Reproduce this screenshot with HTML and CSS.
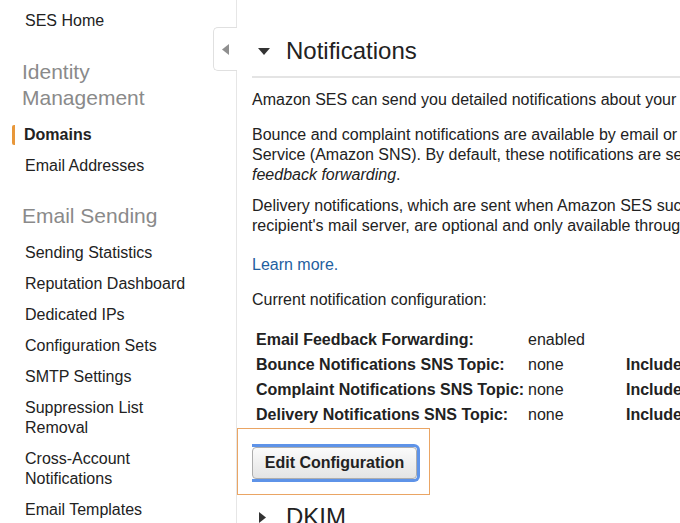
FILE: index.html
```html
<!DOCTYPE html>
<html lang="en">
<head>
<meta charset="utf-8">
<title>SES Notifications</title>
<link rel="stylesheet" href="styles.css">
</head>
<body>
<div class="layout">
  <nav class="sidebar">
    <a class="nav-item home" href="#">SES Home</a>
    <div class="nav-heading">Identity<br>Management</div>
    <a class="nav-item active" href="#">Domains</a>
    <a class="nav-item" href="#">Email Addresses</a>
    <div class="nav-heading">Email Sending</div>
    <a class="nav-item" href="#">Sending Statistics</a>
    <a class="nav-item" href="#">Reputation Dashboard</a>
    <a class="nav-item" href="#">Dedicated IPs</a>
    <a class="nav-item" href="#">Configuration Sets</a>
    <a class="nav-item" href="#">SMTP Settings</a>
    <a class="nav-item" href="#">Suppression List Removal</a>
    <a class="nav-item" href="#">Cross-Account Notifications</a>
    <a class="nav-item" href="#">Email Templates</a>
    <div class="collapse-tab">
      <svg width="7" height="11" viewBox="0 0 7 11"><path d="M7 0 L0 5.5 L7 11 Z" fill="#8f8f8f"/></svg>
    </div>
  </nav>
  <main class="main">
    <div class="section-head">
      <svg class="caret-down" width="12" height="7" viewBox="0 0 12 7"><path d="M0 0 L12 0 L6 7 Z" fill="#333"/></svg>
      <h2>Notifications</h2>
    </div>
    <p class="p-intro">Amazon SES can send you detailed notifications about your bounces, complaints, and deliveries.</p>
    <p class="p-bounce">Bounce and complaint notifications are available by email or through Amazon Simple Notification<br>Service (Amazon SNS). By default, these notifications are sent to you via email by a feature called<br><em>feedback forwarding</em>.</p>
    <p class="p-delivery">Delivery notifications, which are sent when Amazon SES successfully delivers one of your emails to a<br>recipient's mail server, are optional and only available through Amazon SNS.</p>
    <p class="p-learn"><a class="link" href="#">Learn more.</a></p>
    <p class="p-current">Current notification configuration:</p>
    <div class="config">
      <div class="label">Email Feedback Forwarding:</div><div class="value">enabled</div><div class="extra"></div>
      <div class="label">Bounce Notifications SNS Topic:</div><div class="value">none</div><div class="extra">Include Original Headers: disabled</div>
      <div class="label">Complaint Notifications SNS Topic:</div><div class="value">none</div><div class="extra">Include Original Headers: disabled</div>
      <div class="label">Delivery Notifications SNS Topic:</div><div class="value">none</div><div class="extra">Include Original Headers: disabled</div>
    </div>
    <div class="highlight">
      <div class="btn-ring"><button class="btn">Edit Configuration</button></div>
    </div>
    <div class="section-head collapsed">
      <svg class="caret-right" width="7" height="11" viewBox="0 0 7 11"><path d="M0 0 L7 5.5 L0 11 Z" fill="#333"/></svg>
      <h2>DKIM</h2>
    </div>
  </main>
</div>
</body>
</html>
```
FILE: styles.css
```css
html, body {
  margin: 0;
  padding: 0;
}
body {
  width: 680px;
  height: 523px;
  overflow: hidden;
  background: #fff;
  font-family: "Liberation Sans", Arial, Helvetica, sans-serif;
  color: #222;
}
.layout {
  display: flex;
  align-items: stretch;
  min-height: 523px;
}
.sidebar {
  position: relative;
  flex: none;
  width: 237px;
  box-sizing: border-box;
  padding: 11px 36px 0 0;
  border-right: 1px solid #e6e6e6;
  display: flex;
  flex-direction: column;
  align-items: flex-start;
}
.nav-item {
  display: block;
  padding-left: 25px;
  font-size: 16px;
  line-height: 20px;
  color: #222;
  text-decoration: none;
  margin-bottom: 11px;
}
.nav-item.home {
  margin-bottom: 12px;
}
.nav-item.active {
  margin-left: 12px;
  padding-left: 9px;
  border-left: 3px solid #e8973a;
  border-radius: 2px;
  font-weight: bold;
}
.nav-heading {
  padding-left: 22px;
  margin-top: 16px;
  margin-bottom: 14px;
  font-size: 21px;
  line-height: 26px;
  color: #8a8a8a;
}
.collapse-tab {
  position: absolute;
  left: 213px;
  top: 27px;
  width: 23px;
  height: 42px;
  box-sizing: content-box;
  border: 1px solid #e0e0e0;
  border-right: none;
  border-radius: 5px 0 0 5px;
  background: #fff;
  display: flex;
  align-items: center;
  justify-content: flex-start;
}
.collapse-tab svg {
  margin-left: 8px;
}
.main {
  flex: none;
  width: 1000px;
  padding: 36px 0 0 15px;
  font-size: 16px;
  line-height: 20px;
}
.section-head {
  display: flex;
  align-items: center;
  padding: 0 0 10px 6px;
  border-bottom: 2px solid #e4e4e4;
}
.section-head h2 {
  margin: 0;
  font-size: 24px;
  line-height: 30px;
  font-weight: normal;
  color: #222;
}
.caret-down {
  margin-right: 16px;
}
.caret-right {
  margin-left: 1px;
  margin-right: 20px;
}
.section-head.collapsed {
  border-bottom: none;
  margin-top: 7px;
}
p {
  margin: 0;
}
.p-intro {
  margin-top: 12px;
  margin-bottom: 15px;
}
.p-bounce {
  margin-bottom: 11px;
}
.p-delivery {
  margin-bottom: 19px;
}
.p-learn {
  margin-bottom: 15px;
}
.link {
  color: #1f5f9f;
  text-decoration: none;
}
.config {
  margin: 17px 0 1px 4px;
  display: grid;
  grid-template-columns: 272px 98px auto;
  line-height: 25px;
}
.config .label,
.config .extra {
  font-weight: bold;
  white-space: nowrap;
}
.highlight {
  margin-left: -15px;
  border: 1px solid #eaa564;
  padding: 15px 0 0 14px;
  box-sizing: border-box;
  width: 193px;
  height: 67px;
}
.btn-ring {
  display: inline-block;
  border: 3px solid #5e93e8;
  border-left: none;
  border-radius: 0 6px 6px 0;
}
.btn {
  display: block;
  width: 165px;
  height: 32px;
  margin: 0;
  padding: 0 8px;
  border: 1px solid #adadad;
  border-radius: 4px;
  background: linear-gradient(#fbfbfb, #e4e4e4);
  font-family: "Liberation Sans", Arial, Helvetica, sans-serif;
  font-size: 16px;
  font-weight: bold;
  color: #222;
  text-align: center;
}
```
